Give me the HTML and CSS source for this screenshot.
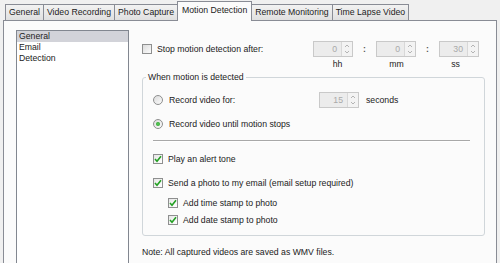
FILE: index.html
```html
<!DOCTYPE html>
<html lang="en">
<head>
    <meta charset="UTF-8">
    <title>Motion Detection Settings</title>
    <link rel="stylesheet" href="styles.css">
</head>
<body>
    <div class="tabs">
        <div class="tab first">General</div>
        <div class="tab">Video Recording</div>
        <div class="tab">Photo Capture</div>
        <div class="tab active">Motion Detection</div>
        <div class="tab">Remote Monitoring</div>
        <div class="tab">Time Lapse Video</div>
    </div>

    <div class="panel">
        <div class="listbox">
            <div class="item selected">General</div>
            <div class="item">Email</div>
            <div class="item">Detection</div>
        </div>

        <div class="settings">
            <div class="stop-row">
                <div class="opt wide">
                    <span class="check"></span>
                    <span>Stop motion detection after:</span>
                </div>
                <div class="spin"><span class="val">0</span><span class="arrows"><svg width="8" height="14" viewBox="0 0 8 14"><path d="M2 5 L4 3 L6 5 M2 9 L4 11 L6 9" fill="none" stroke="#b4b4b4" stroke-width="1"/></svg></span></div>
                <span class="colon">:</span>
                <div class="spin"><span class="val">0</span><span class="arrows"><svg width="8" height="14" viewBox="0 0 8 14"><path d="M2 5 L4 3 L6 5 M2 9 L4 11 L6 9" fill="none" stroke="#b4b4b4" stroke-width="1"/></svg></span></div>
                <span class="colon">:</span>
                <div class="spin"><span class="val">30</span><span class="arrows"><svg width="8" height="14" viewBox="0 0 8 14"><path d="M2 5 L4 3 L6 5 M2 9 L4 11 L6 9" fill="none" stroke="#b4b4b4" stroke-width="1"/></svg></span></div>
            </div>
            <div class="units">
                <span>hh</span>
                <span>mm</span>
                <span>ss</span>
            </div>

            <div class="group">
                <span class="legend">When motion is detected</span>

                <div class="row">
                    <div class="opt">
                        <span class="radio"></span>
                        <span>Record video for:</span>
                    </div>
                    <div class="spin"><span class="val">15</span><span class="arrows"><svg width="8" height="14" viewBox="0 0 8 14"><path d="M2 5 L4 3 L6 5 M2 9 L4 11 L6 9" fill="none" stroke="#b4b4b4" stroke-width="1"/></svg></span></div>
                    <span class="suffix">seconds</span>
                </div>
                <div class="row gap8">
                    <div class="opt">
                        <span class="radio on"></span>
                        <span>Record video until motion stops</span>
                    </div>
                </div>

                <div class="separator"></div>

                <div class="row gap9">
                    <span class="check on"><svg width="8" height="8" viewBox="0 0 8 8"><path d="M1 4 L3 6.2 L7 1.3" fill="none" stroke="#22a022" stroke-width="1.6"/></svg></span>
                    <span>Play an alert tone</span>
                </div>
                <div class="row gap8">
                    <span class="check on"><svg width="8" height="8" viewBox="0 0 8 8"><path d="M1 4 L3 6.2 L7 1.3" fill="none" stroke="#22a022" stroke-width="1.6"/></svg></span>
                    <span>Send a photo to my email (email setup required)</span>
                </div>
                <div class="row sub gap4">
                    <span class="check on"><svg width="8" height="8" viewBox="0 0 8 8"><path d="M1 4 L3 6.2 L7 1.3" fill="none" stroke="#22a022" stroke-width="1.6"/></svg></span>
                    <span>Add time stamp to photo</span>
                </div>
                <div class="row sub gap1">
                    <span class="check on"><svg width="8" height="8" viewBox="0 0 8 8"><path d="M1 4 L3 6.2 L7 1.3" fill="none" stroke="#22a022" stroke-width="1.6"/></svg></span>
                    <span>Add date stamp to photo</span>
                </div>
            </div>

            <p class="note">Note: All captured videos are saved as WMV files.</p>
        </div>
    </div>
</body>
</html>
```

FILE: styles.css
```css
body {
    margin: 0;
    background: #f0f0f0;
    font-family: "Liberation Sans", Arial, sans-serif;
    font-size: 8.7px;
    color: #222;
    overflow: hidden;
}
.tabs {
    display: flex;
    align-items: flex-end;
    height: 20px;
    padding-left: 5px;
    position: relative;
    z-index: 1;
}
.tab {
    height: 15px;
    line-height: 15px;
    padding: 0 3px;
    border: 1px solid #898c95;
    border-left: none;
    border-bottom: none;
    background: linear-gradient(#f2f2f2, #e0e0e0);
    white-space: nowrap;
}
.tab.first {
    border-left: 1px solid #898c95;
}
.tab.active {
    height: 19px;
    line-height: 17px;
    margin-left: -1px;
    margin-bottom: -1px;
    padding: 0 4px;
    border-left: 1px solid #898c95;
    background: #fbfbfb;
}
.panel {
    display: flex;
    gap: 13px;
    height: 233px;
    margin: 0 3px;
    padding: 9px 0 0 12px;
    border: 1px solid #898c95;
    border-bottom: none;
    background: #fbfbfb;
}
.listbox {
    width: 111px;
    height: 232px;
    border: 1px solid #828790;
    border-bottom: none;
    background: #fff;
}
.item {
    height: 11px;
    line-height: 11px;
    padding-left: 2px;
}
.item.selected {
    background: #d2d3d9;
}
.settings {
    width: 343px;
}
.stop-row {
    display: flex;
    align-items: center;
    margin-top: 11px;
    height: 16px;
}
.opt {
    display: flex;
    align-items: center;
    gap: 5px;
    width: 161px;
}
.opt.wide {
    width: 171px;
}
.check, .radio {
    width: 8px;
    height: 8px;
    border: 1px solid #8e8f8f;
    background: linear-gradient(135deg, #dcdcdc, #fbfbfb);
    display: flex;
    align-items: center;
    justify-content: center;
    flex-shrink: 0;
}
.check.on {
    background: linear-gradient(135deg, #e6e6e6, #ffffff);
}
.radio {
    border-radius: 50%;
}
.radio.on::after {
    content: "";
    width: 4px;
    height: 4px;
    border-radius: 50%;
    background: radial-gradient(#5fd35f, #1c8f1c);
}
.spin {
    display: flex;
    width: 38px;
    height: 14px;
    border: 1px solid #c9c9c9;
    background: #ececec;
    color: #a9a9a9;
}
.spin .val {
    flex: 1;
    text-align: right;
    line-height: 14px;
    padding-right: 4px;
}
.spin .arrows {
    width: 10px;
    border-left: 1px solid #d8d8d8;
    background: #f3f3f3;
    display: flex;
    justify-content: center;
}
.colon {
    width: 23px;
    text-align: center;
    font-weight: bold;
    color: #555;
}
.units {
    display: flex;
    padding-left: 166px;
    margin-top: 2px;
    height: 11px;
    line-height: 11px;
}
.units span {
    width: 60px;
    text-align: center;
}
.group {
    position: relative;
    margin-top: 7px;
    padding: 14px 0 7px 10px;
    border: 1px solid #d0d6da;
    border-radius: 3px;
}
.legend {
    position: absolute;
    top: -6px;
    left: 3px;
    padding: 0 2px;
    background: #fbfbfb;
    line-height: 11px;
}
.row {
    display: flex;
    align-items: center;
    gap: 5px;
    height: 16px;
}
.row .opt {
    gap: 6px;
}
.row.sub {
    margin-left: 15px;
}
.gap8 { margin-top: 8px; }
.gap9 { margin-top: 9px; }
.gap4 { margin-top: 4px; }
.gap1 { margin-top: 1px; }
.suffix {
    margin-left: 2px;
}
.separator {
    margin: 8px 14px 0 0;
    border-top: 1px solid #a8a8a8;
    border-bottom: 1px solid #fff;
}
.note {
    margin: 11px 0 0;
    line-height: 11px;
}
```
